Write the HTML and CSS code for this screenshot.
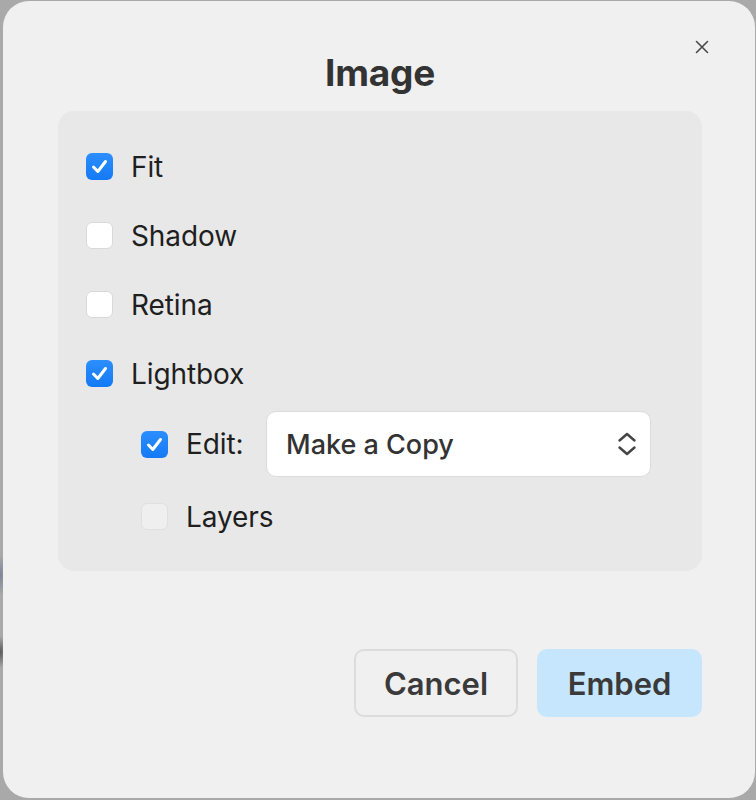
FILE: index.html
```html
<!DOCTYPE html>
<html lang="en">
<head>
<meta charset="utf-8">
<title>Image</title>
<link rel="stylesheet" href="styles.css">
</head>
<body>
<div class="dialog">
  <button class="close" aria-label="Close">
    <svg width="14" height="14" viewBox="0 0 14 14"><path d="M1.5 1.5 L12.5 12.5 M12.5 1.5 L1.5 12.5" stroke="#4a4a4a" stroke-width="1.6" stroke-linecap="round" fill="none"/></svg>
  </button>
  <h1 class="title">Image</h1>
  <div class="panel">
    <label class="row">
      <span class="cb checked"><svg viewBox="0 0 27 27"><path d="M7.5 14 L11.8 18.5 L19.5 8.5" stroke="#fff" stroke-width="3" stroke-linecap="round" stroke-linejoin="round" fill="none"/></svg></span>
      <span class="label">Fit</span>
    </label>
    <label class="row">
      <span class="cb"></span>
      <span class="label">Shadow</span>
    </label>
    <label class="row">
      <span class="cb"></span>
      <span class="label">Retina</span>
    </label>
    <label class="row">
      <span class="cb checked"><svg viewBox="0 0 27 27"><path d="M7.5 14 L11.8 18.5 L19.5 8.5" stroke="#fff" stroke-width="3" stroke-linecap="round" stroke-linejoin="round" fill="none"/></svg></span>
      <span class="label">Lightbox</span>
    </label>
    <div class="row sub edit-row">
      <span class="cb checked"><svg viewBox="0 0 27 27"><path d="M7.5 14 L11.8 18.5 L19.5 8.5" stroke="#fff" stroke-width="3" stroke-linecap="round" stroke-linejoin="round" fill="none"/></svg></span>
      <span class="label edit-label">Edit:</span>
      <div class="select">
        <span class="select-text">Make a Copy</span>
        <svg class="chev" width="20" height="26" viewBox="0 0 20 26"><path d="M2.5 9.5 L10 3 L17.5 9.5 M2.5 16.5 L10 23 L17.5 16.5" stroke="#444" stroke-width="2.4" stroke-linecap="round" stroke-linejoin="round" fill="none"/></svg>
      </div>
    </div>
    <label class="row sub layers-row">
      <span class="cb disabled"></span>
      <span class="label">Layers</span>
    </label>
  </div>
  <div class="footer">
    <button class="btn cancel">Cancel</button>
    <button class="btn embed">Embed</button>
  </div>
</div>
</body>
</html>
```
FILE: styles.css
```css
* { box-sizing: border-box; }
html, body { margin: 0; padding: 0; }
body {
  width: 756px;
  height: 800px;
  overflow: hidden;
  background-color: #a9a9a9;
  background-image:
    radial-gradient(ellipse 10px 20px at 0 575px, #7d8596, rgba(125,133,150,0)),
    radial-gradient(ellipse 10px 16px at 0 652px, #5a5a5a, rgba(90,90,90,0));
  font-family: Inter, "Noto Sans", sans-serif;
}
.dialog {
  position: relative;
  margin: 1px 1px 0 3px;
  width: 752px;
  height: 797px;
  background: #f0f0f0;
  border-radius: 26px;
  display: flex;
  flex-direction: column;
  padding: 50px 53px 0 55px;
}
.close {
  position: absolute;
  top: 39px;
  left: 692px;
  width: 14px;
  height: 14px;
  padding: 0;
  border: 0;
  background: none;
  display: flex;
}
.title {
  margin: 0 0 16px;
  height: 44px;
  line-height: 44px;
  font-size: 37px;
  font-weight: 700;
  color: #333;
  text-align: center;
  letter-spacing: -0.2px;
}
.panel {
  background: #e8e8e8;
  border-radius: 16px;
  height: 460px;
  padding: 21px 28px 20px;
  display: flex;
  flex-direction: column;
}
.row {
  height: 69px;
  display: flex;
  align-items: center;
  gap: 18px;
}
.row.sub { padding-left: 55px; }
.edit-row { height: 66px; margin-top: 3px; }
.layers-row { margin-top: 5px; }
.cb {
  width: 27px;
  height: 27px;
  flex: none;
  border-radius: 6px;
  background: #fff;
  border: 1px solid #d9d9d9;
  display: flex;
}
.cb svg { width: 100%; height: 100%; }
.cb.checked {
  border: none;
  background: linear-gradient(#2c8eff, #1479f5);
}
.cb.disabled {
  background: #efefef;
  border-color: #e0e0e0;
}
.label {
  font-size: 28px;
  color: #1f1f1f;
  letter-spacing: -0.1px;
}
.edit-label { width: 62px; flex: none; }
.select {
  width: 385px;
  height: 66px;
  background: #fff;
  border: 1px solid #dcdcdc;
  border-radius: 10px;
  display: flex;
  align-items: center;
  justify-content: space-between;
  padding: 0 13px 0 19px;
}
.select-text {
  font-size: 27px;
  font-weight: 500;
  color: #333;
}
.footer {
  margin-top: 78px;
  display: flex;
  justify-content: flex-end;
  gap: 19px;
}
.btn {
  width: 164px;
  height: 68px;
  border-radius: 10px;
  font-family: Inter, "Noto Sans", sans-serif;
  font-size: 31px;
  font-weight: 600;
  color: #3a3a3a;
  padding: 0;
}
.cancel {
  background: #f0f0f0;
  border: 2px solid #dcdcdc;
}
.embed {
  width: 165px;
  background: #c5e6fd;
  border: none;
}
```
